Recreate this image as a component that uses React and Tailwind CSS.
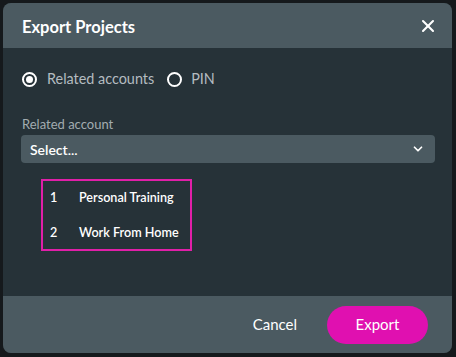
import React, { useState } from 'react';
import { X, ChevronDown } from 'lucide-react';

export default function App() {
  const [mode, setMode] = useState('RELATED'); // 'RELATED', 'PIN'
  const accounts = [
    { id: 1, name: 'Personal Training' },
    { id: 2, name: 'Work From Home' },
  ];

  return (
    <div className="w-[456px] h-[357px] bg-[#15191c] p-[3px] font-['Lato','Noto_Sans',sans-serif]">
      <div className="w-[449px] h-[350px] rounded-lg overflow-hidden flex flex-col bg-[#263238]">
        {/* Header */}
        <div className="h-[45px] shrink-0 bg-[#4b5a61] flex items-center justify-between pl-[19px] pr-[14px]">
          <h3 className="text-white font-bold text-[16.5px] leading-none pt-[4px]">Export Projects</h3>
          <button className="text-white">
            <X size={20} strokeWidth={2.5} />
          </button>
        </div>

        {/* Body */}
        <div className="flex-1 px-[18px] pt-[21px]">
          <div className="flex items-center h-[20px]">
            <button onClick={() => setMode('RELATED')} className="flex items-center">
              <span className="w-[15px] h-[15px] rounded-full border-2 border-white flex items-center justify-center ml-[1px]">
                {mode === 'RELATED' && <span className="w-[7px] h-[7px] rounded-full bg-white" />}
              </span>
              <span className="ml-[10px] text-[14.4px] text-[#b4bcc0]">Related accounts</span>
            </button>
            <button onClick={() => setMode('PIN')} className="flex items-center ml-[13px]">
              <span className="w-[15px] h-[15px] rounded-full border-2 border-white flex items-center justify-center">
                {mode === 'PIN' && <span className="w-[7px] h-[7px] rounded-full bg-white" />}
              </span>
              <span className="ml-[9px] text-[14.4px] text-[#b4bcc0]">PIN</span>
            </button>
          </div>

          <label className="block mt-[27px] text-[13px] text-[#a2acb0] leading-[16px] pl-[1px]">Related account</label>
          <div className="mt-[3px] w-[414px] h-[28px] rounded bg-[#4b5a61] flex items-center justify-between pl-[9px] pr-[10px]">
            <span className="text-white text-[14px] font-semibold">Select...</span>
            <ChevronDown size={14} strokeWidth={3} className="text-white" />
          </div>

          <div className="mt-[16px] ml-[20px] w-[151px] h-[72px] border-2 border-[#e01fa8] flex flex-col justify-center gap-[14px] pl-[7px]">
            {accounts.map(a => (
              <div key={a.id} className="flex items-center text-white text-[12.6px] font-semibold leading-[21px]">
                <span className="w-[29px]">{a.id}</span>
                <span>{a.name}</span>
              </div>
            ))}
          </div>
        </div>

        {/* Footer */}
        <div className="h-[57px] shrink-0 bg-[#4b5a61] flex items-center justify-end pr-[24px]">
          <button className="text-white text-[15px] mr-[30px]">Cancel</button>
          <button className="w-[101px] h-[38px] rounded-full bg-[#e010b0] text-white text-[15px]">Export</button>
        </div>
      </div>
    </div>
  );
}
